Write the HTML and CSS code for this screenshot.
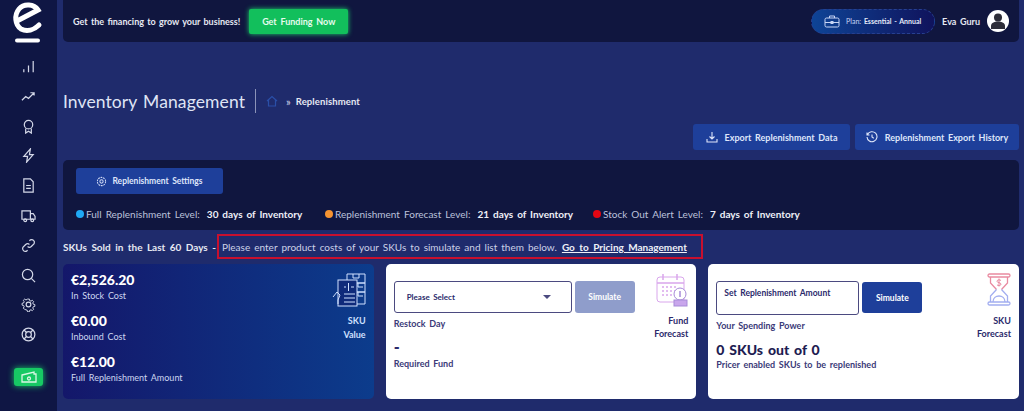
FILE: index.html
```html
<!DOCTYPE html>
<html>
<head>
    <meta charset="utf-8" />
    <title>Replenishment</title>
    <link rel="stylesheet" href="styles.css">
</head>
<body>
    <div class="sidebar">
        <svg class="logo" width="32" height="42" viewBox="0 0 32 42" fill="none" stroke="#fff" stroke-width="5" stroke-linecap="round">
            <path d="M5 20 L26 9 C22 3 12 2 7 8 C2 14 3 24 9 28 C15 31 22 29 27 24" />
            <path d="M5 39.500 H26" stroke-width="4" />
        </svg>
        <div class="side_icons">
            <svg class="side_icon" viewBox="0 0 16 16"><path d="M3 14v-3M8 14V7M13 14V2" /></svg>
            <svg class="side_icon" viewBox="0 0 16 16"><path d="M1 12l4-4 3 2 6-6M10 4h4v3" /></svg>
            <svg class="side_icon" viewBox="0 0 16 16"><circle cx="8" cy="6" r="4.500" /><path d="M5 10v5l3-2 3 2v-5" /></svg>
            <svg class="side_icon" viewBox="0 0 16 16"><path d="M10 1L3 9h4l-1 6 7-8H9z" /></svg>
            <svg class="side_icon" viewBox="0 0 16 16"><path d="M3 1h7l3 3v11H3zM5.500 8h5M5.500 11h5" /></svg>
            <svg class="side_icon" viewBox="0 0 16 16"><path d="M1 3h9v9H1zM10 6h3l2 3v3h-5" /><circle cx="4.500" cy="13" r="1.500" /><circle cx="12" cy="13" r="1.500" /></svg>
            <svg class="side_icon" viewBox="0 0 16 16"><path d="M7 9a3 3 0 0 0 4 0l3-3a3 3 0 0 0-4-4L9 3M9 7a3 3 0 0 0-4 0l-3 3a3 3 0 0 0 4 4l1-1" /></svg>
            <svg class="side_icon" viewBox="0 0 16 16"><circle cx="7" cy="7" r="5.500" /><path d="M11 11l4 4" /></svg>
            <svg class="side_icon" viewBox="0 0 16 16"><circle cx="8" cy="8" r="2.500" /><path d="M6.800 1h2.400l.4 2 1.700.7 1.700-1.100 1.700 1.700-1.100 1.700.7 1.700 2 .4v2.400l-2 .4-.7 1.700 1.100 1.700-1.700 1.700-1.700-1.100-1.700.7-.4 2H6.800l-.4-2-1.700-.7L3 14.400l-1.700-1.700 1.100-1.700-.7-1.700-2-.4V6.500l2-.4.7-1.700L1.300 2.700 3 1l1.700 1.100 1.700-.7z" transform="translate(1.400 1.400) scale(.82)" /></svg>
            <svg class="side_icon" viewBox="0 0 16 16"><circle cx="8" cy="8" r="6.800" /><circle cx="8" cy="8" r="3" /><path d="M3.200 3.200l2.700 2.700M12.800 3.200l-2.700 2.700M3.200 12.800l2.700-2.700M12.800 12.800l-2.700-2.700" /></svg>
        </div>
        <div class="side_cash">
            <svg width="16" height="12" viewBox="0 0 16 12" fill="none" stroke="#d9f7e4" stroke-width="1.300"><path d="M1 4l12-3v2h2v8H1z" /><circle cx="8" cy="7.500" r="1.500" /></svg>
        </div>
    </div>

    <div class="main">
        <div class="topbar">
            <span class="top_text">Get the financing to grow your business!</span>
            <a class="btn_funding">Get Funding Now</a>
            <div class="top_right">
                <div class="plan">
                    <svg width="16" height="13" viewBox="0 0 16 13" fill="none" stroke="#c9d6f5" stroke-width="1"><rect x="1" y="3" width="14" height="9" rx="1.500" /><path d="M5.500 3V1h5v2M1 7.500h14" /><rect x="7" y="6.500" width="2" height="2" /></svg>
                    <span>Plan: <b>Essential - Annual</b></span>
                </div>
                <span class="user_name">Eva Guru</span>
                <span class="avatar">
                    <svg width="14" height="16" viewBox="0 0 14 16" fill="#2d2d38"><circle cx="7" cy="4.500" r="4" /><path d="M0 16v-3c0-3 3-4.500 7-4.500s7 1.500 7 4.500v3z" /></svg>
                </span>
            </div>
        </div>

        <div class="title_row">
            <h1>Inventory Management</h1>
            <svg class="home" width="12" height="12" viewBox="0 0 12 12" fill="none" stroke="#2a4fa8" stroke-width="1.200"><path d="M1 6l5-4.500L11 6M2.500 5v6h7V5" /></svg>
            <span class="crumb_sep">»</span>
            <span class="crumb">Replenishment</span>
        </div>

        <div class="export_row">
            <a class="btn_export btn_first">
                <svg width="12" height="12" viewBox="0 0 12 12" fill="none" stroke="#dfe6fa" stroke-width="1.100"><path d="M6 1v7M3.500 5.500L6 8l2.500-2.500M1 8v3h10V8" /></svg>
                Export Replenishment Data
            </a>
            <a class="btn_export btn_second">
                <svg width="12" height="12" viewBox="0 0 12 12" fill="none" stroke="#dfe6fa" stroke-width="1.100"><path d="M1.500 3.500A5 5 0 1 1 1 6M1 1.500v2.500h2.500M6 3.500V6l1.800 1.200" /></svg>
                Replenishment Export History
            </a>
        </div>

        <div class="settings_panel">
            <a class="btn_settings">
                <svg width="11" height="11" viewBox="0 0 12 12" fill="none" stroke="#cfd9f5" stroke-width="1.100"><circle cx="6" cy="6" r="1.800" /><circle cx="6" cy="6" r="4.500" stroke-dasharray="2 .8" /></svg>
                Replenishment Settings
            </a>
            <div class="levels">
                <span class="level level1"><i class="dot dot_blue"></i>Full Replenishment Level: <b>30 days of Inventory</b></span>
                <span class="level level2"><i class="dot dot_orange"></i>Replenishment Forecast Level: <b>21 days of Inventory</b></span>
                <span class="level"><i class="dot dot_red"></i>Stock Out Alert Level: <b>7 days of Inventory</b></span>
            </div>
        </div>

        <div class="notice_row">
            <b class="notice_lead">SKUs Sold in the Last 60 Days -</b>
            <span class="notice_box">Please enter product costs of your SKUs to simulate and list them below. <a>Go to Pricing Management</a></span>
        </div>

        <div class="cards">
            <div class="card card_blue">
                <div class="card_body">
                    <div class="amount">€2,526.20</div>
                    <div class="amount_label">In Stock Cost</div>
                    <div class="amount">€0.00</div>
                    <div class="amount_label">Inbound Cost</div>
                    <div class="amount">€12.00</div>
                    <div class="amount_label">Full Replenishment Amount</div>
                </div>
                <div class="card_side">
                    <svg width="34" height="34" viewBox="0 0 34 34" fill="none" stroke="#cfe0ff" stroke-width="1"><path d="M15 1h18v9H15zM21 1v4h6V1M20 10h13v9H20zM20 19h13v12H20zM26 10v4h5M26 19v4h5" /><rect x="6" y="7" width="19" height="26" fill="#0f2a7a" /><path d="M12 21h11M12 25h11M12 29h11M12 14h2M19 14h3M16.500 10v8" /><path d="M1 24l4-5 3 3-2 5v4" /></svg>
                    <span>SKU</span>
                    <span>Value</span>
                </div>
            </div>

            <div class="card">
                <div class="card_body">
                    <div class="form_row">
                        <div class="select"><span>Please Select</span><i class="caret"></i></div>
                        <a class="btn_simulate btn_off">Simulate</a>
                    </div>
                    <div class="form_label">Restock Day</div>
                    <div class="dash">-</div>
                    <div class="form_label">Required Fund</div>
                </div>
                <div class="card_side side_dark">
                    <svg width="32" height="34" viewBox="0 0 32 34" fill="none" stroke="#d9a6ec" stroke-width="1"><rect x="1" y="4" width="27" height="25" rx="3" /><path d="M1 10h27M7 1v6M21 1v6" stroke-width="1.500" /><path d="M6 14h16M6 18h13M6 22h10" stroke-dasharray="2 2" stroke-width="1.500" /><circle cx="24" cy="21" r="6" fill="#fff" stroke="#a78bd8" /><path d="M24 18v6" stroke="#a78bd8" stroke-width="1.500" /><rect x="18" y="27" width="13" height="6" fill="#c9a6ec" stroke="#a78bd8" /></svg>
                    <span>Fund</span>
                    <span>Forecast</span>
                </div>
            </div>

            <div class="card">
                <div class="card_body">
                    <div class="form_row">
                        <div class="amount_input">Set Replenishment Amount</div>
                        <a class="btn_simulate btn_on">Simulate</a>
                    </div>
                    <div class="form_label">Your Spending Power</div>
                    <div class="sku_count">0 SKUs out of 0</div>
                    <div class="form_label form_tight">Pricer enabled SKUs to be replenished</div>
                </div>
                <div class="card_side side_dark">
                    <svg width="24" height="34" viewBox="0 0 24 34" fill="none" stroke-width="1.300"><rect x="1" y="1" width="22" height="3" rx="1.500" stroke="#e98aa0" /><path d="M3.500 4v6l6 6.500M20.500 4v6l-6 6.500" stroke="#e98aa0" /><path d="M9.500 16.500L3.500 23v6M14.500 16.500l6 6.500v6" stroke="#a3aef0" /><rect x="1" y="29" width="22" height="3" rx="1.500" stroke="#a3aef0" /><path d="M6 29c0-4 3-6 6-6s6 2 6 6" stroke="#a3aef0" /><path d="M14 7.500c-1-1-4-1-4 .8s4 1 4 2.800-3 1.800-4 .8M12 5.500v8" stroke="#e98aa0" stroke-width="1" /></svg>
                    <span>SKU</span>
                    <span>Forecast</span>
                </div>
            </div>
        </div>
    </div>
</body>
</html>
```

FILE: styles.css
```css
html, body {
    margin:0;
    padding:0;
    height:411px;
    overflow:hidden;
}
body {
    display:flex;
    background:#1f2b6c;
    color:#fff;
    font-family:"Lato", "Open Sans", sans-serif;
    font-size:10px;
    word-spacing:1.500px;
}
a {
    display:flex;
    align-items:center;
    justify-content:center;
}
h1 {
    margin:0;
    font-size:17.500px;
    font-weight:400;
    letter-spacing:.1px;
    color:#dfe4f5;
}

/* sidebar */
.sidebar {
    width:57px;
    flex:none;
    background:#0f1644;
    display:flex;
    flex-direction:column;
    align-items:center;
    padding-top:1px;
    box-sizing:border-box;
}
.logo {
    margin-left:-2px;
}
.side_icons {
    margin-top:16px;
    display:flex;
    flex-direction:column;
    align-items:center;
    gap:14.800px;
}
.side_icon {
    width:15px;
    height:15px;
    display:block;
    fill:none;
    stroke:#d4d8e8;
    stroke-width:1.300;
}
.side_cash {
    margin-top:26px;
    width:29px;
    height:18px;
    border-radius:3px;
    background:#17c964;
    box-shadow:0 0 6px #17c964;
    display:flex;
    align-items:center;
    justify-content:center;
}

/* main column */
.main {
    flex:1;
    min-width:0;
    padding:0 5px 0 6px;
}
.topbar {
    height:42px;
    background:#10163f;
    border-radius:0 0 5px 5px;
    display:flex;
    align-items:center;
    padding:0 10px 0 10px;
}
.top_text {
    font-size:9px;
    font-weight:700;
    color:#e6e8f2;
    word-spacing:1.100px;
}
.btn_funding {
    margin-left:9px;
    width:99px;
    height:25px;
    border-radius:2px;
    background:#12bf5c;
    box-shadow:0 0 5px #1dd36d;
    font-size:9px;
    font-weight:700;
    color:#e6fbee;
}
.top_right {
    margin-left:auto;
    display:flex;
    align-items:center;
}
.plan {
    width:124px;
    height:25px;
    box-sizing:border-box;
    border:1px dashed #27408f;
    border-radius:13px;
    background:linear-gradient(90deg, #0e4496, #10135c);
    display:flex;
    align-items:center;
    gap:6px;
    padding-left:12px;
    font-size:7px;
    color:#c9d6f5;
    word-spacing:1px;
}
.plan b {
    color:#e4eaf9;
}
.user_name {
    margin-left:7px;
    font-size:9px;
    font-weight:700;
    color:#e6e8f2;
}
.avatar {
    margin-left:7px;
    width:22px;
    height:22px;
    border-radius:50%;
    background:#fff;
    display:flex;
    align-items:center;
    justify-content:center;
    overflow:hidden;
}

.title_row {
    margin-top:47px;
    height:24px;
    display:flex;
    align-items:center;
}
.home {
    margin-left:10px;
    padding-left:10px;
    border-left:1px solid #8b93b8;
    height:24px;
}
.crumb_sep {
    margin-left:8px;
    font-size:11px;
    color:#cfd4ea;
}
.crumb {
    margin-left:5px;
    font-size:9.500px;
    font-weight:700;
    letter-spacing:.1px;
    color:#e6e8f2;
}

.export_row {
    margin-top:11px;
    display:flex;
    justify-content:flex-end;
    gap:5px;
}
.btn_export {
    height:26px;
    gap:7px;
    background:#1e3f9a;
    border-radius:3px;
    font-size:9px;
    font-weight:700;
    color:#dfe6fa;
}
.btn_first {
    width:157px;
}
.btn_second {
    width:164px;
}

.settings_panel {
    margin-top:10px;
    height:70px;
    box-sizing:border-box;
    background:#10163f;
    border-radius:5px;
    padding:8px 13px 0;
}
.btn_settings {
    width:147px;
    height:26px;
    gap:5px;
    background:#1e3f9a;
    border-radius:3px;
    font-size:8.500px;
    font-weight:700;
    color:#dfe6fa;
}
.levels {
    margin-top:14px;
    display:flex;
    font-size:10px;
    color:#bcc2dc;
    white-space:nowrap;
}
.level b {
    margin-left:3px;
    color:#eef0f8;
}
.level1 {
    width:249px;
}
.level2 {
    width:268px;
}
.dot {
    display:inline-block;
    width:8px;
    height:8px;
    border-radius:50%;
    margin-right:2px;
}
.dot_blue {
    background:#1fa9f5;
}
.dot_orange {
    background:#f59331;
}
.dot_red {
    background:#e30613;
}

.notice_row {
    margin-top:4px;
    height:25px;
    display:flex;
    align-items:center;
    font-size:10px;
    white-space:nowrap;
}
.notice_lead {
    width:154px;
    flex:none;
    color:#e6e8f2;
    word-spacing:2px;
}
.notice_box {
    width:486px;
    height:25px;
    box-sizing:border-box;
    border:2px solid #c8102e;
    padding-left:3px;
    display:flex;
    align-items:center;
    white-space:pre;
    color:#cdd2e8;
}
.notice_box a {
    margin-left:1px;
    font-weight:700;
    color:#eef0f8;
    text-decoration:underline;
    word-spacing:2px;
}

.cards {
    margin-top:5px;
    display:grid;
    grid-template-columns:repeat(3, 1fr);
    gap:12px;
}
.card {
    height:135px;
    box-sizing:border-box;
    background:#fff;
    border-radius:5px;
    padding:7px 8px 0 8px;
    display:flex;
    justify-content:space-between;
    color:#2b2a6b;
}
.card_blue {
    background:linear-gradient(90deg, #14176a, #0c3c8c);
    color:#fff;
}
.card_side {
    display:flex;
    flex-direction:column;
    align-items:flex-end;
    font-size:9px;
    font-weight:700;
    line-height:14px;
    color:#cfe0ff;
    padding-top:2px;
}
.card_side svg {
    margin-bottom:7px;
}
.side_dark {
    color:#2b2a6b;
    line-height:13px;
}
.amount {
    font-size:14px;
    font-weight:900;
    line-height:18px;
}
.amount_label {
    font-size:9px;
    line-height:13px;
    margin-bottom:10px;
    color:#cdd6f0;
}
.form_row {
    display:flex;
    gap:3px;
    margin-top:10px;
}
.select {
    width:178px;
    height:32px;
    box-sizing:border-box;
    border:1px solid #4b4a80;
    border-radius:3px;
    padding:0 20px 0 12px;
    display:flex;
    align-items:center;
    justify-content:space-between;
    font-size:8px;
    font-weight:700;
}
.caret {
    border:4px solid transparent;
    border-top:4px solid #4b4a80;
    border-bottom:0;
}
.amount_input {
    width:143px;
    height:34px;
    box-sizing:border-box;
    border:1px solid #4b4a80;
    border-radius:3px;
    padding:6px 7px 0;
    font-size:8.500px;
    font-weight:700;
}
.btn_simulate {
    width:60px;
    border-radius:3px;
    font-size:8.500px;
    font-weight:700;
    color:#fff;
}
.btn_off {
    height:32px;
    background:#8f9dcb;
}
.btn_on {
    height:31px;
    margin-top:1px;
    background:#1e3f9a;
}
.form_label {
    margin-top:5px;
    font-size:9px;
    font-weight:700;
    color:#3b3a78;
}
.form_tight {
    margin-top:1px;
}
.dash {
    margin-top:10px;
    height:14px;
    font-size:16px;
    font-weight:900;
    line-height:15px;
}
.sku_count {
    margin-top:10px;
    font-size:14px;
    font-weight:900;
    line-height:17px;
    color:#1e1d52;
}
```
